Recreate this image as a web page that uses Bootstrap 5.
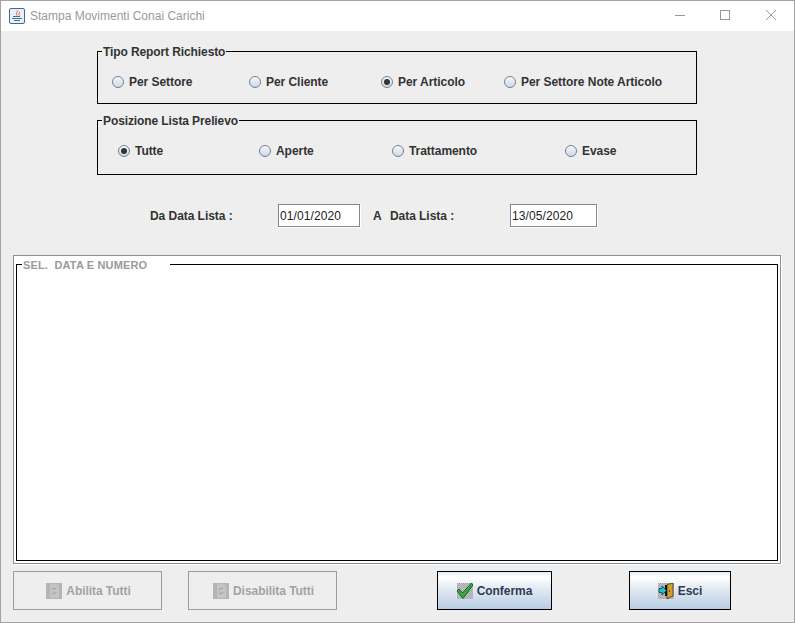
<!DOCTYPE html>
<html lang="it"><head><meta charset="utf-8"><title>Stampa Movimenti Conai Carichi</title>
<link href="https://cdn.jsdelivr.net/npm/bootstrap@5.3.0/dist/css/bootstrap.min.css" rel="stylesheet">
<style>
html,body{height:100%;margin:0}
body{background:#eee;font-family:"Liberation Sans",Arial,sans-serif;font-size:12px;font-weight:700;color:#333;overflow:hidden;letter-spacing:-.05px}
.win{width:795px;height:623px;border:1px solid #a3a3a3;display:flex;flex-direction:column;background:#eee}
.titlebar{height:30px;background:#fff;flex:none;padding-left:8px}
.titletxt{font-weight:400;font-size:12px;color:#9a9a9a;margin-left:5px;letter-spacing:0}
.winctl{width:45px;height:30px}
.grp{width:600px;border:1px solid #000;margin:0 0 0 96px;padding:0;min-width:0;display:block;flex:none}
.grp legend{float:none;width:auto;margin:0 0 0 4px;padding:2px 1px 0;font-size:12px;line-height:12px;font-weight:700;color:#333;letter-spacing:-.1px}
.g1{height:60px;margin-top:13px}
.g2{height:62px;margin-top:9px}
.radio{display:flex;align-items:center;color:#333;white-space:nowrap;height:14px}
.dot{width:12px;height:12px;border-radius:50%;border:1px solid #6f829b;background:linear-gradient(#f7f9fb,#cfd8e4);margin-right:5px;flex:none;display:flex;align-items:center;justify-content:center}
.dot.on::after{content:"";width:6px;height:6px;border-radius:50%;background:#333}
.rows1{display:flex;padding:17px 0 0 14px}
.rows2{display:flex;padding:17px 0 0 20px}
.w137{width:137px}.w132{width:132px}.w123{width:123px}.w141{width:141px}.w133{width:133px}.w173{width:173px}
.dates{display:flex;align-items:center;height:23px;margin-top:29px;padding-left:149px;flex:none}
.fld{height:23px;background:#fff;border:1px solid #7a8a99;font-size:12px;font-weight:400;color:#222;padding:1px 0 0 1px;display:flex;align-items:center;width:82px;letter-spacing:.1px;box-shadow:1px 1px 0 #fff}
.fld2{width:87px}
.lbl1{width:128px}.lbl2{margin-left:13px;width:9px}.lbl3{margin-left:8px;width:120px}
.outer{margin:28px 0 0 12px;width:768px;height:309px;border:1px solid #84919f;background:#fff;padding:1px 2px 2px 2px;flex:none;box-shadow:1px 1px 0 #fff}
.inner{height:100%;border:1px solid #000;margin:0;padding:0;min-width:0;background:#fff;display:block}
.inner legend{float:none;width:148px;margin:0 0 0 5px;padding:2px 0 0 1px;font-size:11px;line-height:13px;font-weight:700;color:#9a9a9a;white-space:pre;background:#fff;letter-spacing:.15px}
.btns{display:flex;margin:7px 0 0 12px;flex:none}
.jb{height:39px;display:flex;align-items:center;justify-content:center;font-size:12px;font-weight:700;flex:none;padding:0}
.jb svg{margin-right:4px}
.dis{border:1px solid #9c9c9c;color:#a3a3a3;background:#eee;padding-left:2px}
.act{border:1px solid #000;color:#2f3a55;background:linear-gradient(#e4ebf3 0,#fff 14%,#e6edf5 40%,#b8cde3 100%)}
.b1{width:149px}.b2{width:149px;margin-left:26px}.b3{width:115px;margin-left:100px}.b4{width:102px;margin-left:77px}
</style></head><body>
<svg width="0" height="0" class="d-block"><defs><pattern id="dith" width="2" height="2" patternUnits="userSpaceOnUse"><rect width="2" height="2" fill="#c8c8cc"/><rect width="1" height="1" fill="#9aa0a4"/><rect x="1" y="1" width="1" height="1" fill="#a8a4a8"/></pattern></defs></svg>
<div class="win">
 <div class="titlebar d-flex align-items-center">
  <svg width="16" height="16" viewBox="0 0 16 16"><rect x=".5" y=".5" width="15" height="15" rx="1.5" fill="#eaf0f6" stroke="#3f6c95"/><path d="M8 2.500c1.500 1.500-2 2.500 0 5M10.500 4c.5 1.200-1.500 1.800 0 3.500" stroke="#d5602a" fill="none"/><path d="M4 8.500h7M3 10.500h10M5 12.500h6" stroke="#41719c"/></svg>
  <span class="titletxt">Stampa Movimenti Conai Carichi</span>
  <div class="ms-auto d-flex">
   <svg class="winctl" viewBox="0 0 45 30"><path d="M16 14.500h10" stroke="#999"/></svg>
   <svg class="winctl" viewBox="0 0 45 30"><rect x="16.500" y="9.500" width="9" height="9" fill="none" stroke="#999"/></svg>
   <svg class="winctl" viewBox="0 0 45 30"><path d="M17 9l10 10M27 9L17 19" stroke="#999" fill="none"/></svg>
  </div>
 </div>
 <fieldset class="grp g1"><legend>Tipo Report Richiesto</legend>
  <div class="rows1">
   <div class="radio w137"><span class="dot"></span>Per Settore</div>
   <div class="radio w132"><span class="dot"></span>Per Cliente</div>
   <div class="radio w123"><span class="dot on"></span>Per Articolo</div>
   <div class="radio"><span class="dot"></span>Per Settore Note Articolo</div>
  </div>
 </fieldset>
 <fieldset class="grp g2"><legend>Posizione Lista Prelievo</legend>
  <div class="rows2">
   <div class="radio w141"><span class="dot on"></span>Tutte</div>
   <div class="radio w133"><span class="dot"></span>Aperte</div>
   <div class="radio w173"><span class="dot"></span>Trattamento</div>
   <div class="radio"><span class="dot"></span>Evase</div>
  </div>
 </fieldset>
 <div class="dates">
  <div class="lbl1">Da Data Lista :</div><div class="fld">01/01/2020</div>
  <div class="lbl2">A</div><div class="lbl3">Data Lista :</div><div class="fld fld2">13/05/2020</div>
 </div>
 <div class="outer"><fieldset class="inner"><legend>SEL.  DATA E NUMERO</legend></fieldset></div>
 <div class="btns">
  <div class="jb dis b1"><svg width="16" height="16" viewBox="0 0 16 16"><rect width="16" height="16" fill="#b5b5b5"/><path d="M4 1h7l2 2v12H4z" fill="#c4c4c4"/><path d="M6 7a2.500 2.500 0 0 1 4-1M10 9a2.500 2.500 0 0 1-4 1" stroke="#9e9e9e" fill="none"/></svg>Abilita Tutti</div>
  <div class="jb dis b2"><svg width="16" height="16" viewBox="0 0 16 16"><rect width="16" height="16" fill="#b5b5b5"/><path d="M4 1h7l2 2v12H4z" fill="#c4c4c4"/><path d="M6 7a2.500 2.500 0 0 1 4-1M10 9a2.500 2.500 0 0 1-4 1" stroke="#9e9e9e" fill="none"/></svg>Disabilita Tutti</div>
  <div class="jb act b3"><svg width="16" height="16" viewBox="0 0 16 16"><rect width="16" height="16" fill="url(#dith)"/><path d="M0 8l2-2 3.500 4L14.500 0 16 2 6 15.500z" fill="#2fb03c" stroke="#0c3d12" stroke-width=".8"/></svg>Conferma</div>
  <div class="jb act b4"><svg width="16" height="16" viewBox="0 0 16 16"><rect width="16" height="16" fill="url(#dith)"/><path d="M9 1.500L15 0v13l-6 3z" fill="#c9a227" stroke="#222" stroke-width=".7"/><path d="M7 2h2v11H7z" fill="#111"/><path d="M1 5.500h3V3l4.500 4.500L4 12V9.500H1z" fill="#18c4d8" stroke="#123" stroke-width=".7"/><path d="M11 7h1v2h-1z" fill="#b22"/></svg>Esci</div>
 </div>
</div>
</body></html>
